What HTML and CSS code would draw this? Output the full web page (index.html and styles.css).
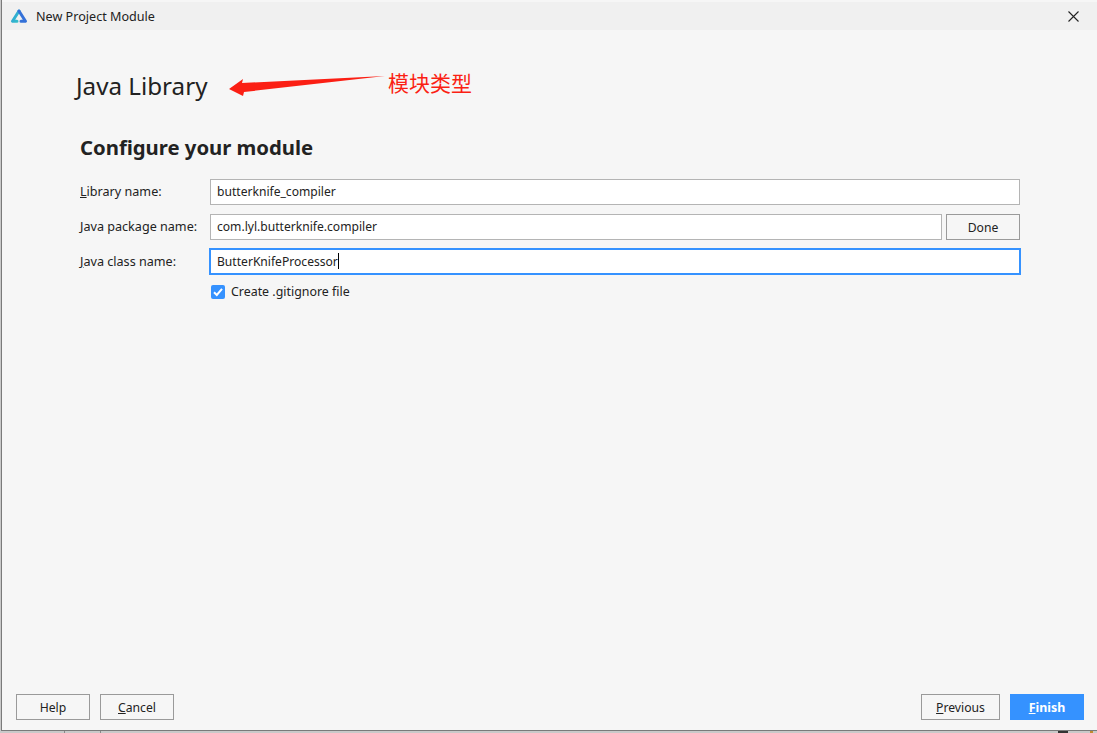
FILE: index.html
```html
<!DOCTYPE html>
<html lang="en">
<head>
    <meta charset="UTF-8">
    <title>New Project Module</title>
    <link rel="stylesheet" href="styles.css">
</head>
<body>
    <div class="window">
        <div class="titlebar">
            <svg class="logo" width="18" height="15" viewBox="0 0 18 15">
                <defs>
                    <linearGradient id="logoLeft" x1="0" y1="0" x2="1" y2="1">
                        <stop offset="0" stop-color="#2f9fd8"/>
                        <stop offset="1" stop-color="#34c0c8"/>
                    </linearGradient>
                </defs>
                <path d="M9 2 L2.5 12.2 L7 12.2" stroke="url(#logoLeft)" stroke-width="3" stroke-linejoin="round" stroke-linecap="round" fill="none"/>
                <path d="M9 2 L15.5 12.2 L11 12.2" stroke="#3471d8" stroke-width="3" stroke-linejoin="round" stroke-linecap="round" fill="none"/>
            </svg>
            <span class="title">New Project Module</span>
            <svg class="close" width="11" height="11" viewBox="0 0 11 11">
                <path d="M0.5 0.5 L10.5 10.5 M10.5 0.5 L0.5 10.5" stroke="#222" stroke-width="1.1" fill="none"/>
            </svg>
        </div>

        <div class="content">
            <h1 class="moduleType">Java Library</h1>
            <h2 class="heading">Configure your module</h2>

            <div class="form">
                <label class="formLabel"><u>L</u>ibrary name:</label>
                <div class="field fieldWide">butterknife_compiler</div>

                <label class="formLabel">Java package name:</label>
                <div class="fieldRow">
                    <div class="field">com.lyl.butterknife.compiler</div>
                    <button class="btn btnDone">Done</button>
                </div>

                <label class="formLabel"><u>J</u>ava class name:</label>
                <div class="field fieldFocus">ButterKnifeProcessor<span class="caret"></span></div>

                <div class="checkRow">
                    <svg class="checkbox" width="14" height="14" viewBox="0 0 14 14">
                        <rect width="14" height="14" rx="2" fill="#3592ff"/>
                        <path d="M3 7.2 L5.8 10 L11 3.8" stroke="#fff" stroke-width="2" fill="none"/>
                    </svg>
                    <span class="checkText">Create .gitignore file</span>
                </div>
            </div>
        </div>

        <div class="footer">
            <button class="btn">Help</button>
            <button class="btn"><u>C</u>ancel</button>
            <span class="spacer"></span>
            <button class="btn btnPrevious"><u>P</u>revious</button>
            <button class="btn btnPrimary"><u>F</u>inish</button>
        </div>
    </div>

    <!-- red annotation drawn over the screenshot -->
    <svg class="arrow" width="160" height="30" viewBox="0 0 160 30">
        <path d="M0 16 L14 6 L13 10 L156 3 L15 19 L14 23 Z" fill="#fb1f14"/>
    </svg>
    <span class="note">模块类型</span>
</body>
</html>
```

FILE: styles.css
```css
html, body {
    margin: 0;
    padding: 0;
    height: 100%;
}
body {
    position: relative;
    overflow: hidden;
    width: 1097px;
    height: 733px;
    font-family: "Noto Sans", "Noto Sans CJK SC", sans-serif;
    font-size: 12px;
    color: #222;
    /* bits of the window behind the dialog, top and bottom edge */
    background:
        linear-gradient(#999, #999) 42px 0 / 1px 2px no-repeat,
        linear-gradient(#999, #999) 69px 0 / 1px 2px no-repeat,
        linear-gradient(#999, #999) 97px 0 / 1px 2px no-repeat,
        linear-gradient(#777, #777) 629px 0 / 1px 2px no-repeat,
        linear-gradient(#5a4a40, #5a4a40) 1009px 0 / 3px 2px no-repeat,
        linear-gradient(#4a4a50, #4a4a50) 1025px 0 / 11px 2px no-repeat,
        linear-gradient(#888, #888) 64px 731px / 1px 2px no-repeat,
        linear-gradient(#888, #888) 100px 731px / 1px 2px no-repeat,
        linear-gradient(#333, #333) 1058px 731px / 10px 2px no-repeat,
        linear-gradient(#c08a30, #c08a30) 1090px 731px / 3px 2px no-repeat,
        #c9c9c9;
}
.window {
    box-sizing: border-box;
    display: flex;
    flex-direction: column;
    height: 731px;
    margin-left: 1px;
    padding-top: 2px;
    background-color: #f6f6f6;
    border-left: 1px solid #7a7a7a;
    border-bottom: 1px solid #7a7a7a;
}
.titlebar {
    display: flex;
    align-items: center;
    height: 28px;
    padding: 0 18px 0 8px;
    background-color: #f0f0f0;
}
.logo {
    margin-right: 8px;
}
.title {
    flex: 1;
    font-size: 12.6px;
}
.content {
    flex: 1;
    padding: 0 77px 0 78px;
}
.moduleType {
    margin: 36px 0 0 -4px;
    height: 40px;
    line-height: 40px;
    font-size: 24.2px;
    font-weight: 400;
}
.heading {
    margin: 26px 0 0;
    height: 30px;
    line-height: 30px;
    font-size: 20.3px;
    font-weight: 700;
}
.form {
    display: grid;
    grid-template-columns: 130px 1fr;
    row-gap: 9px;
    align-items: center;
    margin-top: 17px;
}
.formLabel {
    line-height: 26px;
    font-size: 12.6px;
}
.field {
    box-sizing: border-box;
    flex: 1;
    height: 26px;
    line-height: 24px;
    padding: 0 6px;
    font-size: 12.1px;
    background-color: #fff;
    border: 1px solid #b4b4b4;
}
.fieldRow {
    display: flex;
    gap: 4px;
}
.fieldFocus {
    height: 27px;
    margin: -1px -1px 0 -1px;
    border: 2px solid #3592ff;
    line-height: 23px;
    padding: 0 5px 0 6px;
}
.caret {
    display: inline-block;
    width: 1px;
    height: 16px;
    vertical-align: -3px;
    background-color: #000;
}
.checkRow {
    grid-column: 2;
    display: flex;
    align-items: center;
    gap: 6px;
    margin-top: -1px;
    padding-left: 1px;
}
.checkText {
    font-size: 12.4px;
}
.footer {
    display: flex;
    gap: 10px;
    padding: 0 13px 10px 14px;
}
.spacer {
    flex: 1;
}
.btn {
    box-sizing: border-box;
    width: 74px;
    height: 26px;
    padding: 0;
    font-family: inherit;
    font-size: 12.2px;
    color: #222;
    background-color: #f6f6f6;
    border: 1px solid #9a9a9a;
}
.btnPrevious {
    width: 79px;
}
.btnDone {
    flex: none;
}
.btnPrimary {
    color: #fff;
    font-size: 12.4px;
    font-weight: 700;
    background-color: #3592ff;
    border-color: #3592ff;
}
.arrow {
    position: absolute;
    left: 229px;
    top: 73px;
}
.note {
    position: absolute;
    left: 388px;
    top: 67px;
    font-family: "Noto Sans CJK SC", sans-serif;
    font-size: 21px;
    font-weight: 400;
    line-height: 30px;
    color: #fb1f14;
}
```
